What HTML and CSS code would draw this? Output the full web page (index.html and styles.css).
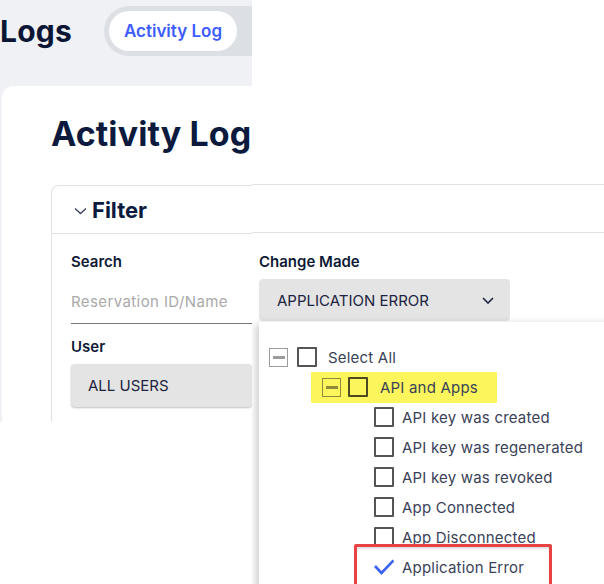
FILE: index.html
```html
<!DOCTYPE html>
<html lang="en">
<head>
    <meta charset="UTF-8">
    <meta name="viewport" content="width=device-width, initial-scale=1.0">
    <title>Activity Log</title>
    <link rel="stylesheet" href="styles.css">
</head>
<body>
    <div class="stage">
        <!-- left capture: the logs page -->
        <section class="pane pane-left">
            <header class="topbar">
                <h1 class="page-title">Logs</h1>
                <div class="tabs">
                    <span class="tab tab-active">Activity Log</span>
                </div>
            </header>

            <div class="card">
                <h2 class="card-title">Activity Log</h2>

                <div class="filter">
                    <div class="filter-head">
                        <svg class="chev" width="13" height="8" viewBox="0 0 13 8">
                            <path d="M1 1.5 L6.5 6.5 L12 1.5" fill="none" stroke="#3a4258" stroke-width="1.3"/>
                        </svg>
                        <span>Filter</span>
                    </div>
                    <div class="filter-body">
                        <label class="field-label">Search</label>
                        <div class="text-input">Reservation ID/Name</div>

                        <label class="field-label field-gap">User</label>
                        <div class="select">ALL USERS</div>
                    </div>
                </div>
            </div>
        </section>

        <!-- right capture: the open dropdown -->
        <section class="pane pane-right">
            <div class="filter filter-cont">
                <div class="filter-head"></div>
                <div class="filter-body">
                    <label class="field-label">Change Made</label>
                    <div class="select select-open">
                        <span>APPLICATION ERROR</span>
                        <svg width="12" height="7" viewBox="0 0 12 7">
                            <path d="M1 1 L6 6 L11 1" fill="none" stroke="#1c2340" stroke-width="1.6"/>
                        </svg>
                    </div>
                    <div class="results">
                        <span class="results-bar"></span>
                    </div>
                </div>
            </div>

            <div class="menu">
                <div class="opt lvl-1">
                    <span class="toggle"></span>
                    <span class="box"></span>
                    <span class="opt-text">Select All</span>
                </div>
                <div class="opt lvl-2">
                    <span class="mark">
                        <span class="toggle"></span>
                        <span class="box"></span>
                        <span class="opt-text">API and Apps</span>
                    </span>
                </div>
                <div class="opt lvl-3">
                    <span class="box"></span>
                    <span class="opt-text">API key was created</span>
                </div>
                <div class="opt lvl-3">
                    <span class="box"></span>
                    <span class="opt-text">API key was regenerated</span>
                </div>
                <div class="opt lvl-3">
                    <span class="box"></span>
                    <span class="opt-text">API key was revoked</span>
                </div>
                <div class="opt lvl-3">
                    <span class="box"></span>
                    <span class="opt-text">App Connected</span>
                </div>
                <div class="opt lvl-3">
                    <span class="box"></span>
                    <span class="opt-text">App Disconnected</span>
                </div>
                <div class="opt lvl-3 picked">
                    <svg class="tick" width="20" height="16" viewBox="0 0 20 16">
                        <path d="M1 7 L7.5 14 L19.5 1.5" fill="none" stroke="#3b63f0" stroke-width="2.6"/>
                    </svg>
                    <span class="opt-text">Application Error</span>
                </div>
            </div>
        </section>
    </div>
</body>
</html>
```

FILE: styles.css
```css
body {
    margin: 0;
    padding: 0;
    background: #ffffff;
    font-family: Inter, "Open Sans", sans-serif;
    color: #0c1a3a;
    overflow: hidden;
}

.stage {
    display: flex;
    width: 604px;
    height: 584px;
    overflow: hidden;
}

.pane {
    flex-shrink: 0;
    overflow: hidden;
}

/* ---- left capture ---- */
.pane-left {
    width: 252px;
    height: 422px;
    background: #f0f1f4;
    display: flex;
    flex-direction: column;
}

.topbar {
    flex-shrink: 0;
    height: 86px;
    display: flex;
    align-items: flex-start;
    padding-top: 6px;
    box-sizing: border-box;
}

.page-title {
    margin: 0;
    font-size: 30px;
    font-weight: 700;
    line-height: 50px;
    letter-spacing: 0.2px;
    color: #0a1633;
}

.tabs {
    flex-shrink: 0;
    margin-left: 32px;
    display: flex;
    width: 200px;
    height: 50px;
    padding: 5px;
    box-sizing: border-box;
    border-radius: 25px 0 0 25px;
    background: #dcdfe4;
    white-space: nowrap;
}

.tab {
    display: flex;
    align-items: center;
    padding: 0 15px;
    border-radius: 20px;
    font-size: 17px;
    font-weight: 600;
    color: #4a5470;
}

.tab-active {
    background: #ffffff;
    color: #3d5cff;
}

.card {
    flex: 1;
    margin-left: 2px;
    padding-left: 49px;
    background: #ffffff;
    border-top-left-radius: 12px;
}

.card-title {
    margin: 28px 0 0;
    font-size: 34px;
    font-weight: 700;
    line-height: 40px;
    letter-spacing: 0.1px;
    white-space: nowrap;
    color: #0b1a3d;
}

.filter {
    margin-top: 31px;
    border: 1px solid #e2e2e2;
    border-right: none;
    border-radius: 8px 0 0 0;
    height: 400px;
}

.filter-head {
    height: 47px;
    display: flex;
    align-items: center;
    padding-left: 22px;
    border-bottom: 1px solid #e2e2e2;
    font-size: 22px;
    font-weight: 700;
    color: #0b1a3d;
}

.chev {
    margin-right: 5px;
    margin-top: 2px;
}

.filter-body {
    padding: 18px 0 0 19px;
}

.field-label {
    display: block;
    font-size: 15px;
    font-weight: 600;
    line-height: 20px;
    color: #0e1a36;
}

.field-gap {
    margin-top: 13px;
}

.text-input {
    margin-top: 8px;
    height: 43px;
    line-height: 43px;
    border-bottom: 1px solid #777;
    font-size: 15px;
    letter-spacing: 0.4px;
    color: #a9a9a9;
    white-space: nowrap;
}

.select {
    margin-top: 7px;
    height: 43px;
    display: flex;
    align-items: center;
    justify-content: space-between;
    padding: 0 16px 0 17px;
    border-radius: 4px;
    background: #e4e4e4;
    box-shadow: 0 1px 2px rgba(0, 0, 0, 0.25);
    font-size: 15px;
    color: #1c2340;
    white-space: nowrap;
}

/* ---- right capture ---- */
.pane-right {
    width: 352px;
    height: 584px;
    position: relative;
    background: #ffffff;
}

.filter-cont {
    margin-top: 184px;
    border: none;
    border-top: 1px solid #e2e2e2;
    border-radius: 0;
}

.filter-cont .filter-body {
    padding: 19px 0 0 7px;
}

.select-open {
    width: 251px;
    height: 42px;
    box-sizing: border-box;
    padding-left: 18px;
    box-shadow: none;
}

.results {
    margin-top: 185px;
    border-top: 1px solid #e2e2e2;
    padding-top: 25px;
}

.results-bar {
    display: block;
    width: 60px;
    height: 4px;
    background: #2f5ef0;
}

/* dropdown menu lies over the page */
.menu {
    position: absolute;
    left: 7px;
    top: 322px;
    width: 400px;
    height: 300px;
    padding: 20px 0 0 10px;
    box-sizing: border-box;
    background: #ffffff;
    box-shadow: -3px 2px 8px rgba(0, 0, 0, 0.2);
}

.opt {
    height: 30px;
    display: flex;
    align-items: center;
    font-size: 15px;
    letter-spacing: 0.2px;
    color: #3a4258;
    white-space: nowrap;
}

.mark {
    display: flex;
    align-items: center;
    height: 31px;
    padding: 0 19px 0 11px;
    background: #fcf65c;
}

.lvl-2 {
    padding-left: 42px;
}

.lvl-3 {
    padding-left: 105px;
}

.toggle {
    width: 17px;
    height: 17px;
    border: 1.5px solid #9c9c9c;
    display: flex;
    align-items: center;
    justify-content: center;
}

.toggle::before {
    content: "";
    width: 12px;
    height: 3px;
    background: #9c9c9c;
}

.mark .toggle {
    border-color: #8f8a3a;
}

.mark .toggle::before {
    background: #8f8a3a;
}

.box {
    width: 16px;
    height: 16px;
    border: 2px solid #555;
    border-radius: 1px;
}

.lvl-1 .box {
    margin-left: 9px;
}

.lvl-1 .opt-text {
    margin-left: 11px;
}

.mark .box {
    margin-left: 7px;
    border-color: #4d4a1f;
}

.mark .opt-text {
    margin-left: 12px;
}

.lvl-3 .opt-text {
    margin-left: 8px;
}

.picked {
    position: relative;
}

/* red annotation frame */
.picked::after {
    content: "";
    position: absolute;
    left: 85px;
    top: -8px;
    width: 192px;
    height: 44px;
    border: 3px solid #e94242;
    border-radius: 2px;
    box-shadow: inset 0 2px 2px rgba(0, 0, 0, 0.12);
}
```
